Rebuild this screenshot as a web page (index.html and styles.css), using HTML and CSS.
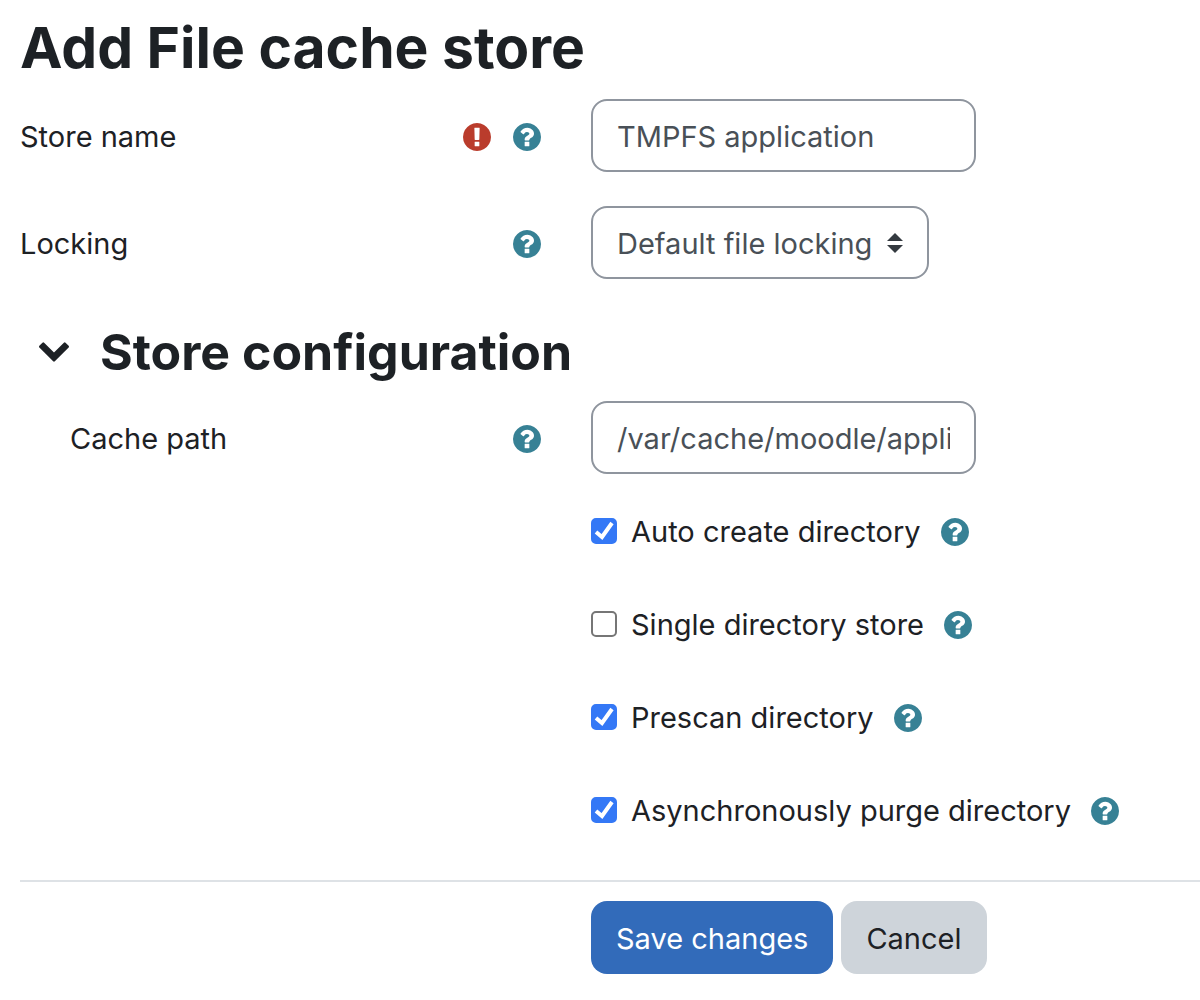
FILE: index.html
```html
<!DOCTYPE html>
<html lang="en">
<head>
<meta charset="utf-8">
<meta name="viewport" content="width=device-width, initial-scale=1">
<title>Add File cache store</title>
<link rel="stylesheet" href="styles.css">
</head>
<body>
<svg class="sprite" aria-hidden="true">
  <symbol id="icon-help" viewBox="128 128 1536 1536"><path d="M1024 1376v-192q0-14-9-23t-23-9h-192q-14 0-23 9t-9 23v192q0 14 9 23t23 9h192q14 0 23-9t9-23zm256-672q0-88-55.500-163t-138.500-116-170-41q-243 0-371 213-15 24 8 42l132 100q7 6 19 6 16 0 25-12 53-68 86-92 34-24 86-24 48 0 85.500 26t37.500 59q0 38-20 61t-68 45q-63 28-115.500 86.500t-52.500 125.500v36q0 14 9 23t23 9h192q14 0 23-9t9-23q0-19 21.500-49.500t54.500-49.500q32-18 49-28.500t46-35 44.500-48 28-60.500 12.500-81zm384 192q0 209-103 385.500t-279.500 279.500-385.500 103-385.500-103-279.500-279.500-103-385.500 103-385.500 279.500-279.500 385.500-103 385.500 103 279.500 279.500 103 385.500z"/></symbol>
  <symbol id="icon-required" viewBox="128 128 1536 1536"><path d="M896 128q209 0 385.500 103t279.500 279.500 103 385.500-103 385.500-279.500 279.500-385.500 103-385.500-103-279.500-279.500-103-385.500 103-385.500 279.500-279.500 385.500-103zm128 1247v-190q0-14-9-23.500t-22-9.500h-192q-13 0-23 10t-10 23v190q0 13 10 23t23 10h192q13 0 22-9.500t9-23.500zm-2-344l18-621q0-12-10-18-10-8-24-8h-220q-14 0-24 8-10 6-10 18l17 621q0 10 10 17.500t24 7.500h185q14 0 23.500-7.500t10.500-17.500z"/></symbol>
  <symbol id="icon-chevron" viewBox="90 533 1612 1035"><path d="M1683 808l-742 741q-19 19-45 19t-45-19l-742-741q-19-19-19-45.500t19-45.500l166-165q19-19 45-19t45 19l531 531 531-531q19-19 45-19t45 19l166 165q19 19 19 45.500t-19 45.500z"/></symbol>
</svg>
<main class="page">
  <h1 class="page-title">Add File cache store</h1>
  <form class="store-form">
    <div class="row">
      <div class="row-label">
        <label for="store-name">Store name</label>
        <span class="row-icons">
          <svg class="icon icon-required" role="img" aria-label="Required"><use href="#icon-required"/></svg>
          <button class="help" type="button" aria-label="Help with Store name"><svg class="icon"><use href="#icon-help"/></svg></button>
        </span>
      </div>
      <input class="field text-field" id="store-name" type="text" value="TMPFS application">
    </div>
    <div class="row">
      <div class="row-label">
        <label for="locking">Locking</label>
        <button class="help" type="button" aria-label="Help with Locking"><svg class="icon"><use href="#icon-help"/></svg></button>
      </div>
      <select class="field select-field" id="locking"><option>Default file locking</option></select>
    </div>

    <section class="section">
      <div class="section-head">
        <button class="toggle" type="button" aria-label="Collapse Store configuration" aria-expanded="true"><svg class="chevron"><use href="#icon-chevron"/></svg></button>
        <h2 class="section-title">Store configuration</h2>
      </div>
      <div class="row">
        <div class="row-label row-label-nested">
          <label for="cache-path">Cache path</label>
          <button class="help" type="button" aria-label="Help with Cache path"><svg class="icon"><use href="#icon-help"/></svg></button>
        </div>
        <input class="field text-field" id="cache-path" type="text" value="/var/cache/moodle/application">
      </div>
      <div class="checks">
        <div class="check-row">
          <input class="check" id="auto-create" type="checkbox" checked>
          <label for="auto-create">Auto create directory</label>
          <button class="help" type="button" aria-label="Help with Auto create directory"><svg class="icon"><use href="#icon-help"/></svg></button>
        </div>
        <div class="check-row">
          <input class="check" id="single-directory" type="checkbox">
          <label for="single-directory">Single directory store</label>
          <button class="help" type="button" aria-label="Help with Single directory store"><svg class="icon"><use href="#icon-help"/></svg></button>
        </div>
        <div class="check-row">
          <input class="check" id="prescan" type="checkbox" checked>
          <label for="prescan">Prescan directory</label>
          <button class="help" type="button" aria-label="Help with Prescan directory"><svg class="icon"><use href="#icon-help"/></svg></button>
        </div>
        <div class="check-row">
          <input class="check" id="async-purge" type="checkbox" checked>
          <label for="async-purge">Asynchronously purge directory</label>
          <button class="help" type="button" aria-label="Help with Asynchronously purge directory"><svg class="icon"><use href="#icon-help"/></svg></button>
        </div>
      </div>
    </section>

    <div class="actions">
      <button class="btn btn-primary" type="submit">Save changes</button>
      <button class="btn btn-secondary" type="button">Cancel</button>
    </div>
  </form>
</main>
</body>
</html>
```
FILE: styles.css
```css
:root {
  --label-width: 521px;
  --column-gap: 50px;
  --text: #1d2125;
  --field-text: #495057;
  --field-border: #8f959e;
  --teal: #378195;
}

* {
  box-sizing: border-box;
}

body {
  margin: 0;
  background: #fff;
  color: var(--text);
  font: 400 29px/44px Inter, "Liberation Sans", sans-serif;
}

button,
input,
select {
  margin: 0;
  font: inherit;
}

.sprite {
  display: none;
}

.page {
  padding: 12px 0 26px 20px;
}

.page-title {
  margin: 0 0 15px;
  font-size: 57px;
  font-weight: 700;
  line-height: 72px;
}

.row {
  display: grid;
  grid-template-columns: var(--label-width) minmax(0, 1fr);
  column-gap: var(--column-gap);
  align-items: center;
  justify-items: start;
  margin-bottom: 34px;
}

.row-label {
  display: flex;
  align-items: center;
  justify-content: space-between;
  width: 100%;
  padding-top: 2px;
}

.row-label-nested {
  padding-left: 50px;
}

.row-icons {
  display: flex;
  gap: 22px;
}

.icon {
  display: block;
  width: 28px;
  height: 28px;
  fill: currentColor;
}

.icon-required {
  color: #ba3c2c;
}

.help,
.toggle {
  padding: 0;
  border: 0;
  background: none;
  color: var(--teal);
  cursor: pointer;
}

.field {
  height: 73px;
  padding: 2px 24px 0;
  border: 2px solid var(--field-border);
  border-radius: 16px;
  background-color: #fff;
  color: var(--field-text);
}

.text-field {
  width: 385px;
  max-width: 100%;
}

.select-field {
  appearance: none;
  width: 338px;
  max-width: 100%;
  background-image: url("data:image/svg+xml,%3Csvg xmlns='http://www.w3.org/2000/svg' viewBox='0 0 16 20'%3E%3Cpath fill='%23343a40' d='M8 0L0 8h16zM8 20l8-8H0z'/%3E%3C/svg%3E");
  background-repeat: no-repeat;
  background-position: right 24px center;
  background-size: 16px 20px;
}

.section-head {
  display: flex;
  align-items: center;
  gap: 31px;
  margin-bottom: 13px;
  padding: 3px 0 0 19px;
}

.toggle {
  color: var(--text);
}

.chevron {
  display: block;
  width: 30px;
  height: 20px;
  fill: currentColor;
}

.section-title {
  margin: 0;
  font-size: 50px;
  font-weight: 700;
  line-height: 72px;
}

.checks {
  display: grid;
  gap: 49px;
  padding: 2px 0 47px calc(var(--label-width) + var(--column-gap));
}

.check-row {
  display: flex;
  align-items: center;
}

.check-row .help {
  margin-left: 20px;
}

.check {
  appearance: none;
  flex: none;
  width: 26px;
  height: 26px;
  margin: 0 14px 2px 0;
  border: 2px solid #767676;
  border-radius: 5px;
  background: #fff center / 26px 26px no-repeat;
}

.check:checked {
  border-color: #3478f6;
  background-color: #3478f6;
  background-image: url("data:image/svg+xml,%3Csvg xmlns='http://www.w3.org/2000/svg' viewBox='0 0 26 26'%3E%3Cpath fill='none' stroke='white' stroke-width='4' d='M5 14l6 5L21 5'/%3E%3C/svg%3E");
}

.actions {
  display: flex;
  gap: 8px;
  padding: 19px 0 0 calc(var(--label-width) + var(--column-gap));
  border-top: 2px solid #dee2e6;
}

.btn {
  height: 73px;
  padding: 2px 25px 0;
  border: 0;
  border-radius: 16px;
  cursor: pointer;
}

.btn-primary {
  background: #326bba;
  color: #fff;
}

.btn-secondary {
  background: #ced4da;
  color: var(--text);
}

@media (max-width: 900px) {
  :root {
    --label-width: 280px;
    --column-gap: 24px;
  }
}
```
